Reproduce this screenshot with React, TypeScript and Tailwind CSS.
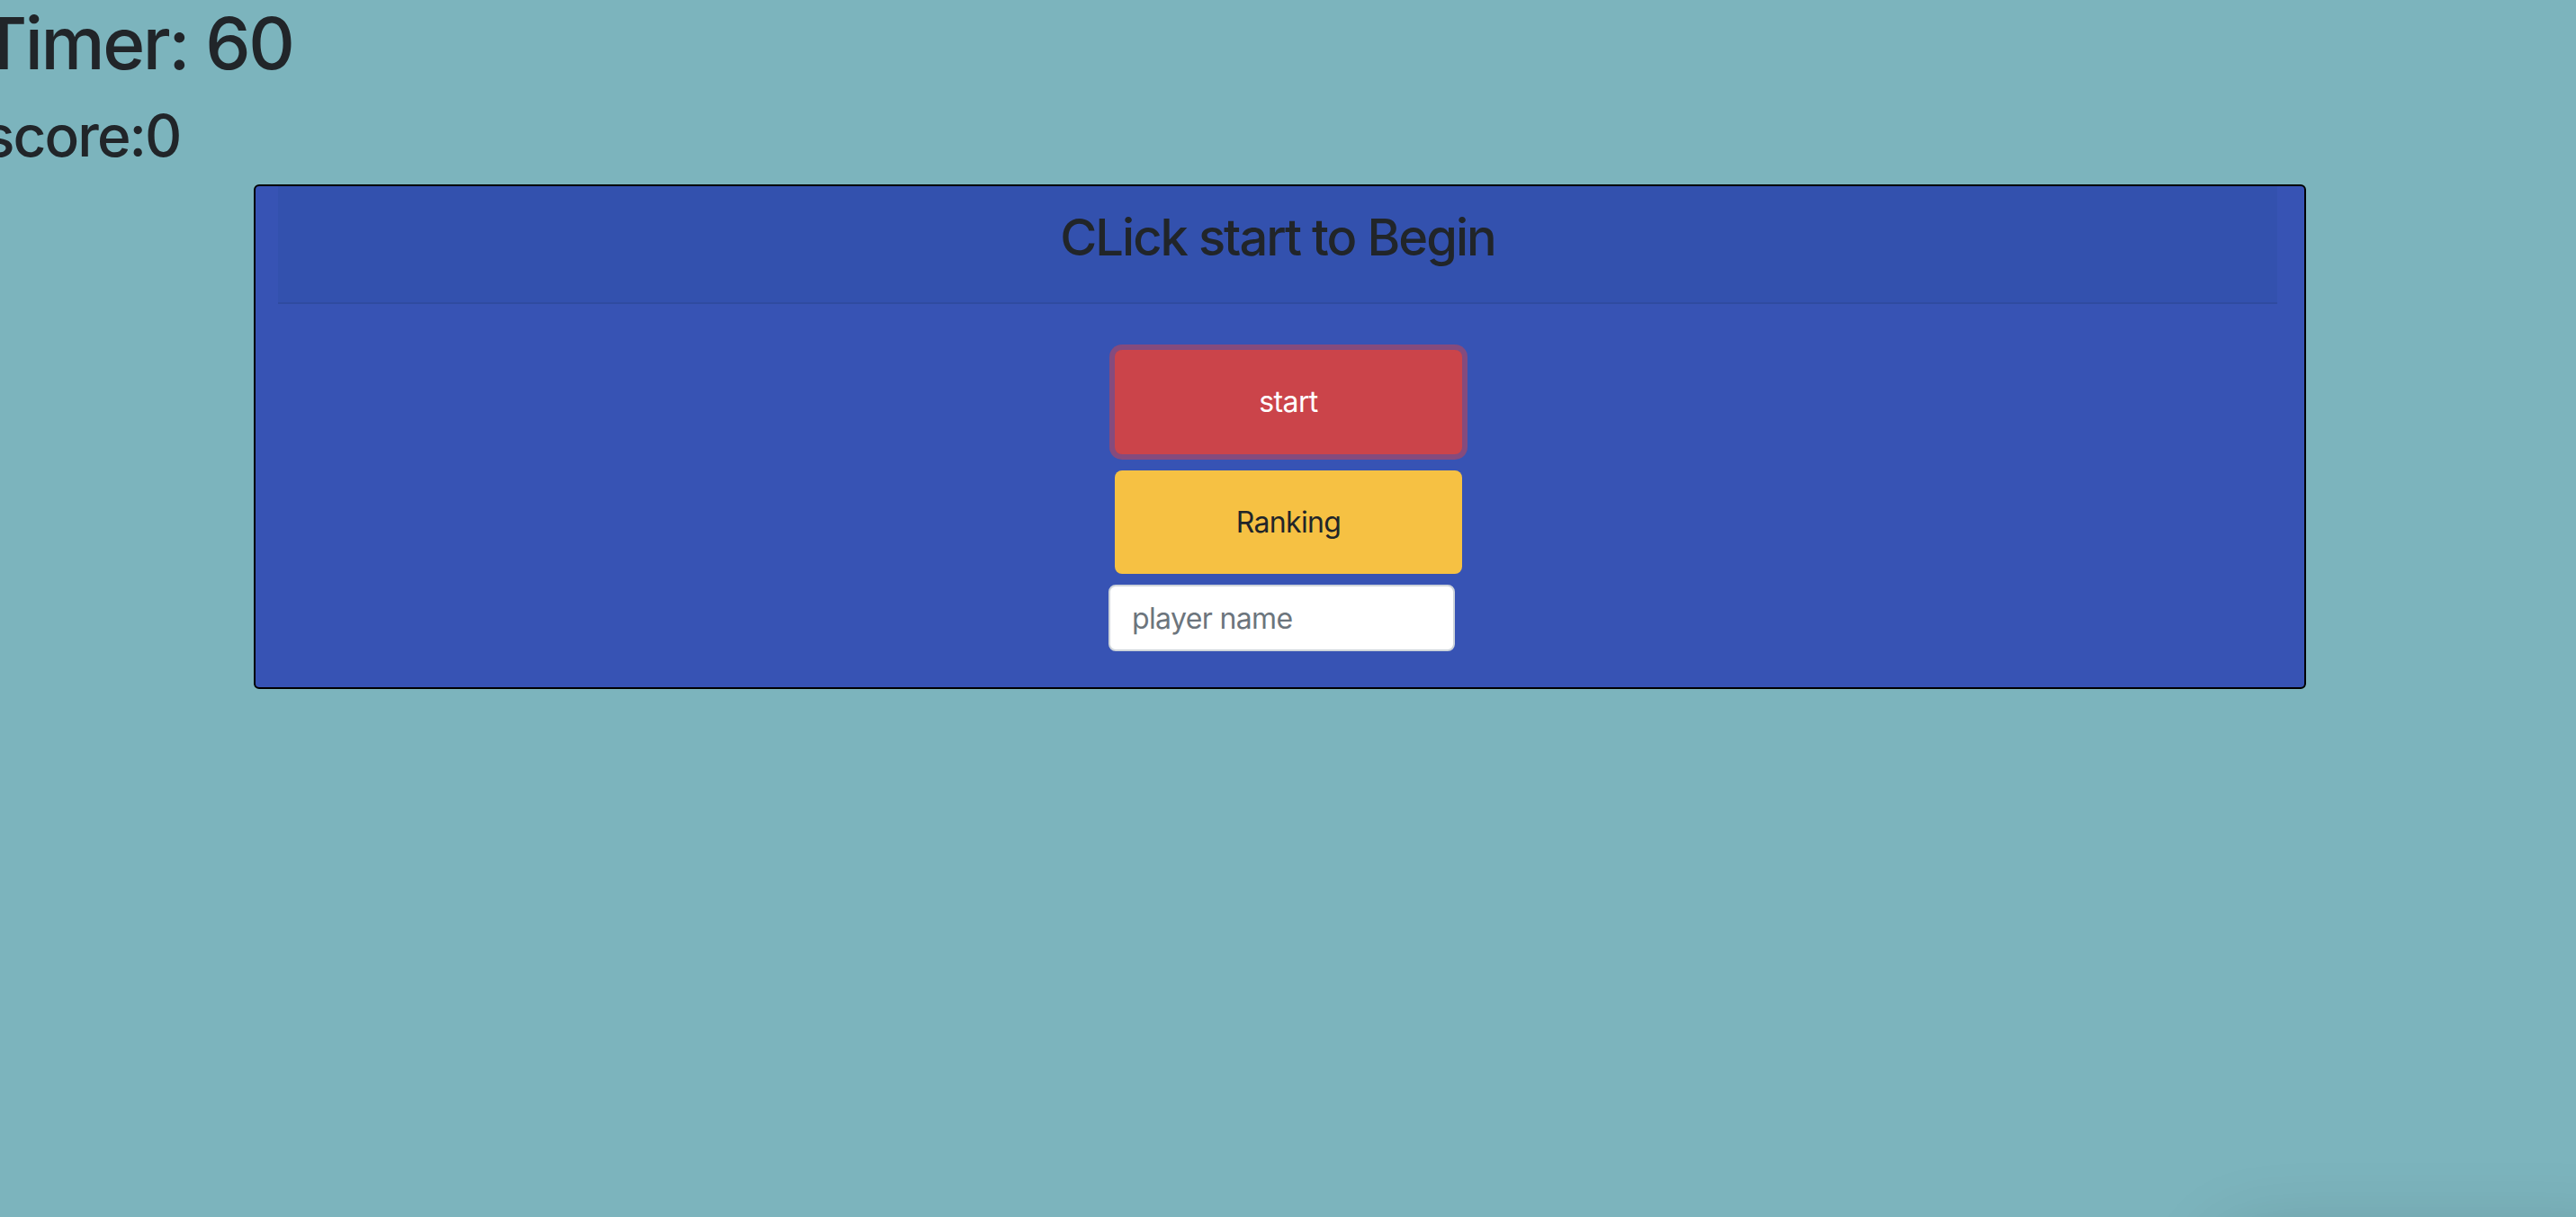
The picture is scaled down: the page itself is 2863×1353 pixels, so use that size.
export default function App() {
	return (
		<div
			className="relative h-[1353px] overflow-hidden bg-[#7cb4bd] text-[#212529]"
			style={{ fontFamily: "Inter, 'Noto Sans', sans-serif" }}
		>
			<h1 className="-ml-[22px] mb-[16px] text-[80px] leading-[96px] font-medium tracking-[-0.03em]">Timer: 60</h1>
			<h2 className="-ml-[18px] mb-[16px] text-[64px] leading-[77px] font-medium tracking-[-0.03em]">score:0</h2>

			<div className="ml-[282px] w-[2281px] rounded-[6px] border-2 border-black bg-[#3753b4]">
				<div className="ml-[25px] mr-[30px] border-b-2 border-[#2f4ba0] bg-[#3351ae] pt-[24px] pb-[22px] text-center">
					<h3 className="mb-[16px] text-[56px] leading-[67px] font-medium tracking-[-0.035em]">CLick start to Begin</h3>
				</div>

				<div className="flex flex-col items-center pt-[51px] pb-[40px]">
					<button className="ml-[19px] h-[116px] w-[386px] rounded-[8px] bg-[#cb444a] text-[32px] tracking-[-0.02em] text-white ring-[6px] ring-[#854b7d]">
						start
					</button>
					<button className="ml-[19px] mt-[18px] h-[115px] w-[386px] rounded-[8px] bg-[#f6c143] text-[32px] tracking-[-0.02em] text-[#212529]">
						Ranking
					</button>
					<input
						placeholder="player name"
						className="ml-[4px] mt-[12px] h-[74px] w-[385px] rounded-[8px] border-2 border-[#ced4da] bg-white px-[24px] text-[32px] tracking-[-0.02em] placeholder:text-[#6c757d] outline-none"
					/>
				</div>
			</div>

			<div className="absolute left-[2480px] top-[1390px] h-[200px] w-[440px] rounded-[24px] bg-[#7cb4bd] shadow-[0_0_90px_10px_rgba(0,0,0,0.18)]" />
		</div>
	);
}
